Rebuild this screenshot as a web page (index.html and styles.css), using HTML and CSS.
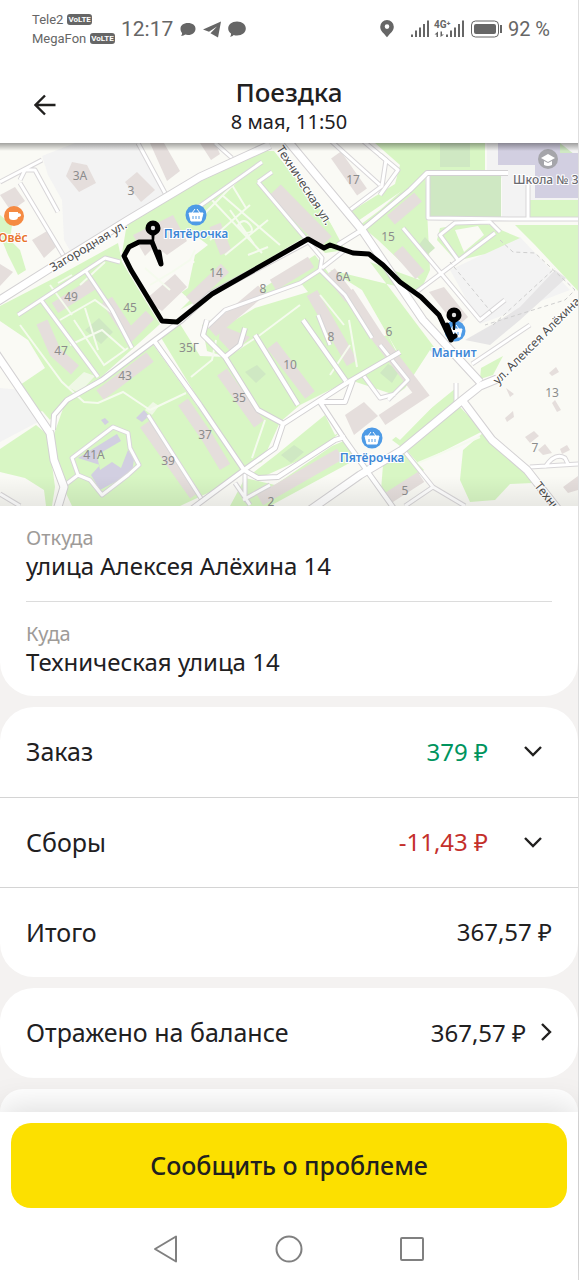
FILE: index.html
```html
<!DOCTYPE html>
<html lang="ru">
<head>
    <meta charset="UTF-8">
    <meta name="viewport" content="width=device-width, initial-scale=1.0">
    <title>Поездка</title>
    <link rel="stylesheet" href="styles.css">
</head>
<body>
    <div class="screen">
        <div class="status-bar">
            <div class="carriers">
                <div class="carrier">Tele2 <span class="volte">VoLTE</span></div>
                <div class="carrier">MegaFon <span class="volte">VoLTE</span></div>
            </div>
            <span class="clock">12:17</span>
            <svg class="notifications" width="66" height="18" viewBox="0 0 66 18">
                <path d="M8 3c4.500 0 7.500 2.300 7.500 5.700S12.500 15 8 15c-1 0-2-.1-2.800-.4C4 15.600 2.300 16 .8 15.800c1-.8 1.400-1.800 1.200-2.900C1 11.800.5 10.300.5 8.700.5 5.300 3.500 3 8 3z"/>
                <path d="M41 1.500 23 9.500l6 2.200L37 6.500l-6.500 6.800 7.500 4.200z"/>
                <path d="M57 1.500c5.200 0 8.800 3 8.800 7s-3.600 7-8.800 7c-1.200 0-2.300-.1-3.300-.5-1 1-2.200 1.500-3.700 1.800.8-1 1.200-2 1-3.200-1.800-1.300-2.800-3-2.800-5.100 0-4 3.600-7 8.800-7z"/>
            </svg>
            <svg class="indicators" width="124" height="20" viewBox="0 0 124 20">
                <path d="M7 1a6.800 6.800 0 0 1 6.800 6.800C13.800 12 10 14.500 7 18.300 4 14.500.2 12 .2 7.800A6.800 6.800 0 0 1 7 1zm0 4.300a2.300 2.300 0 1 0 0 4.600 2.300 2.300 0 0 0 0-4.600z"/>
                <path class="bars" d="M32 15.500V18M36 11.500V18M40 8.500V18M44 5V18M48 1.500V18M67 15.500V18M71 11.500V18M75 8.500V18M79 5V18M83 1.500V18"/>
                <path d="M54.500 15.500 58 12.500V18h-1.500v-2.500zM64 15.500 60.500 18v-5.500H62v3z"/>
                <text class="net" x="54" y="9">4G⁺</text>
                <rect class="battery" x="91.500" y="2" width="27" height="16" rx="4"/>
                <rect x="94" y="5" width="22" height="10" rx="2"/>
                <path d="M120 6h2v8h-2z"/>
            </svg>
            <span class="charge">92 %</span>
        </div>

        <header class="header">
            <button class="back" type="button" aria-label="Назад">
                <svg width="22" height="22" viewBox="0 0 22 22"><path d="M21.500 11H2M11 1.500 1.500 11l9.500 9.500"/></svg>
            </button>
            <h1>Поездка</h1>
            <p>8 мая, 11:50</p>
        </header>

        <svg class="map" viewBox="0 143 578 363" role="img" aria-label="Маршрут поездки">
            <defs>
                <linearGradient id="top-shade" x1="0" y1="0" x2="0" y2="1">
                    <stop offset="0" stop-color="#000" stop-opacity=".35"/>
                    <stop offset="1" stop-color="#000" stop-opacity="0"/>
                </linearGradient>
                <linearGradient id="bottom-shade" x1="0" y1="0" x2="0" y2="1">
                    <stop offset="0" stop-color="#000" stop-opacity="0"/>
                    <stop offset="1" stop-color="#000" stop-opacity=".07"/>
                </linearGradient>
                <g id="basket">
                    <circle r="10.500"/>
                    <path d="M-7-2H7L5 6H-5zM-4-2l3-4M4-2 1-6" fill="#fff" stroke="#fff"/>
                    <path d="M-3 1v3M0 1v3M3 1v3" stroke="#4e9be6"/>
                </g>
                <g id="pin">
                    <path d="M0-7.500A7.500 7.500 0 0 1 7.500 0c0 4-3 6-6 7.500L1 15h-2l-.5-7.500C-4.500 6-7.500 4-7.500 0A7.500 7.500 0 0 1 0-7.500z"/>
                    <circle r="2.200" fill="#ddd"/>
                </g>
                <g id="streets">
                    <path d="M-5 303 60 262 128 220 200 177 270 145"/>
                    <path d="M287 140 362 230 423 320 480 382M-5 352 50 433 54 460 64 487 57 510"/>
                    <path d="M310 510 360 475 402 450 460 402 480 386 497 379M462 400 492 440 527 470 560 512"/>
                </g>
                <g id="driveways">
                    <path d="M53 430 54 415 67 400 102 380 155 340 182 320 210 294 307 242M155 342 200 405 244 470 258 478 278 477 335 440 345 437"/>
                    <path d="M338 245 362 230 410 190 427 173H508M190 510 244 470 275 448 283 424 345 384 400 352"/>
                    <path d="M255 335 298 405M303 320 346 381M207 320 203 335 225 357 258 410 282 423"/>
                    <path d="M225 357 240 345 245 328M320 402 345 402 353 380M320 402 345 440 395 510"/>
                </g>
                <g id="lanes">
                    <path d="M20 180 25 170 35 170 58 212M20 183 68 263M0 182 42 160M138 143 165 193M85 270 112 310 132 348M18 315 105 258 120 262M41 300 98 377"/>
                    <path d="M215 143 232 158M190 213 262 162M258 182 272 172M258 182 322 258 320 270 345 295 372 338M345 250 322 268M330 140 380 185M350 210 382 186 386 160 362 140"/>
                    <path d="M403 228 480 320 505 300M380 155 398 170 380 195M458 260 440 235 455 223 490 222 500 232M415 293 495 233M428 173V218L510 219H579M528 176V218"/>
                    <path d="M207 327 225 310 300 283 320 270M318 315 330 345M363 375 380 398 395 394M380 345 408 380 388 400M456 402V383"/>
                    <path d="M65 485 78 475 72 458 113 427 128 433 130 448 139 465 128 475 102 495 90 480 78 475M148 415 202 500M0 494 20 506"/>
                    <path d="M405 452 433 487 405 506M433 487 465 506M530 467 579 464M545 467q10-15 20-9l3 6M472 364 530 325M235 483 250 505M245 470V500M243 500 270 485"/>
                </g>
            </defs>
            <rect class="land" y="143" width="579" height="363"/>

            <g class="quarter">
                <path d="M42 156 75 143H140L168 195 100 237 72 254 64 240 62 200 48 175z"/>
                <path d="M0 388 22 390 38 422 0 442z"/>
                <path d="M450 270 520 237 570 290 480 324z"/>
                <path d="M487 143H579V220H502V178H487z"/>
            </g>

            <g class="park">
                <path d="M128 217 195 180 258 151 274 151 330 222 345 250 325 253 308 235 212 293 170 315 163 305 188 288 195 255 208 245 195 235 170 228 135 245 122 253z"/>
                <path d="M0 306 60 275 118 243 122 262 145 300 160 324 100 378 66 398 50 420 20 385 45 368 28 340 0 321z"/>
                <path d="M22 388 44 372 62 385 52 410 36 412z"/>
                <path d="M66 400 152 343 200 410 244 470 225 485 180 506 72 506 63 487 52 440z"/>
                <path d="M0 449 36 425 48 435 55 487 52 506 46 506 44 490 25 478 0 472z"/>
                <path d="M160 336 180 324 200 356 226 357 207 351 202 325 260 290 315 255 330 275 420 378 395 395 350 380 300 405 280 422 262 462 244 470 205 410z"/>
                <path d="M350 212 395 184 400 165 375 143 485 143V172L425 175 352 225z"/>
                <path d="M330 270 362 290 425 400 455 384 440 355 370 262 420 280 378 240 360 225 380 210 425 170 430 270 420 292z"/>
                <path d="M440 228 480 221 520 238 485 254 456 261 437 240z"/>
                <path d="M515 225H579V292L535 245z"/>
                <path d="M528 200H579V218H528z"/>
                <path d="M392 440 456 388 460 407 483 431 430 458 418 463 408 452z"/>
                <path d="M463 450 484 432 527 473 533 483 510 484 495 500 470 502 460 480z"/>
                <path d="M383 465 405 450 424 470 395 495 392 506 381 490z"/>
                <path d="M276 455 325 415 335 435 340 432 322 450 258 479 250 475z"/>
                <path d="M245 478 275 485 332 446 346 440 355 460 270 506H230z"/>
                <path d="M370 340 388 335 408 376 390 392 375 370z"/>
                <path d="M481 368 503 356 493 375 480 379z"/>
                <path d="M0 215 12 225 10 240 20 250 26 270 18 275 8 255 0 235z"/>
                <path d="M520 143H560L579 158V165L545 160z" class="shade"/>
                <path class="shade" d="M430 174H501V218L430 219z"/>
                <path class="shade" d="M440 143H470V167H440z"/>
                <path class="shade" d="M425 237l10 11-9 8-8-10zM245 372l12-7 9 9-10 9zM281 455l13-10 10 7-13 11zM85 330l14-12 14 14-12 12zM380 373l8-9 12 6-8 13z"/>
            </g>
            <g class="yard">
                <path d="M283 424 345 386 353 384 335 405 300 425 282 440zM207 322 225 310 300 282 308 292 255 308 215 332zM125 258 150 245 158 262 180 250 195 262 168 280 190 300 170 320 158 318z"/>
                <path d="M68 387 84 372 95 376 79 393zM145 410l8-8 6 4-7 9z" opacity=".7"/>
                <path d="M345 400 370 390 400 396 430 350 455 384 400 440 360 410zM180 150l40-7 20 10-40 24z"/>
                <path d="M455 230 478 226 484 235 464 252zM290 155 300 150 360 228 345 245 330 222zM434 345 460 350 478 380 455 386 438 370z"/>
            </g>

            <g class="building">
                <path d="M72 162l15 3 9 18-17 9-13-16zM125 182l12-10 18 18-14 12zM0 195l15-8 10 14-14 10zM32 240l15-9 11 14-14 13zM0 264l13 8-13 14zM150 143h14l16 28-13 10zM200 143h15l5 11-9 6z"/>
                <path class="block wide-block" d="M275 190 326 242"/>
                <path class="block" d="M215 225 226 253M190 301 225 268"/>
                <path class="block" d="M336 155 362 192"/>
                <path class="block" d="M212 332 262 290M273 285l38-23M55 308 93 284"/>
                <path class="block" d="M391 220 418 197M398 250 420 275M330 272 350 298"/>
                <path class="block" d="M42 322 55 352 75 370M100 395 150 357M222 372 259 424M272 345 310 395M312 293 352 363M348 292 378 338 421 394 382 420"/>
                <path class="block" d="M145 424 195 495M183 402 207 437 225 467"/>
                <path class="block" d="M260 500 340 454M385 500 421 477M107 300 130 335 150 315"/>
                <path d="M133 235l40-20 14 26-20 14-12-9-10 10zM145 300l30-26 12 13-25 24zM429 292l15-5 24 30-11 10zM220 325l30 12-17 17-14-15zM345 415l19-13 14 14-24 19z"/>
                <path d="M525 437l9-6 5 5-9 7zM538 450l7-6 7 9-9 2zM549 373l7-6 3 5-7 4zM505 418l8-7 1 6-7 5zM560 449l7-4 3 5-8 4zM563 487l15-11v14l-10 3zM555 400l6 10-4 2-5-9zM506 388l8 6-4 3z"/>
            </g>
            <path class="mall" d="M500 320 520 307 555 270 566 278 520 320 490 345 465 340z"/>
            <g class="school">
                <path d="M498 143H560V153H579V198H535V165H498z"/>
                <path d="M78 458 117 434 121 441 97 455 100 470 112 462 121 468 128 450 134 459 132 473 100 490 91 475 100 465z"/>
                <path d="M101 420l4-2 4 4-4 3zM136 418l8-8 5 6-7 6z"/>
            </g>

            <g class="paths">
                <path d="M212 200 262 253M222 195 280 245M232 185 246 208M210 240 250 205M200 218 240 178M225 255 268 220M248 255l20-8M230 210l24 34M238 225q6-8 12 0t-6 8z"/>
                <path d="M60 320 95 300 115 315M70 345 102 330 125 350M85 308 98 350M74 320 104 365 128 348M50 285 72 315M105 262 80 285M58 283l14-8"/>
                <path d="M20 325 62 382 84 402 98 403 123 392 150 410M150 410 186 393M191 377 212 360 216 340"/>
                <path d="M226 357 260 335 300 305M265 420 252 458M320 295l24 30M349 320 357 367M418 463 480 437"/>
                <path d="M150 285 172 272 190 260 195 250M145 268 170 290M330 375 350 345"/>
            </g>
            <use class="lane-edge" href="#lanes"/>
            <use class="lane" href="#lanes"/>
            <use class="driveway-edge" href="#driveways"/>
            <use class="street-edge" href="#streets"/>
            <use class="driveway" href="#driveways"/>
            <use class="street" href="#streets"/>
            <path class="track" d="M492 313 450 262M493 325 555 268M500 240 513 252 535 253 575 290 565 300 485 325"/>

            <g class="house">
                <text x="80" y="180">3А</text><text x="131" y="195">3</text><text x="353" y="184">17</text>
                <text x="388" y="241">15</text><text x="216" y="277">14</text><text x="263" y="293">8</text>
                <text x="343" y="281">6А</text><text x="71" y="301">49</text><text x="130" y="312">45</text>
                <text x="61" y="355">47</text><text x="189" y="352">35Г</text><text x="125" y="380">43</text>
                <text x="331" y="341">8</text><text x="389" y="336">6</text><text x="290" y="369">10</text>
                <text x="239" y="402">35</text><text x="205" y="439">37</text><text x="94" y="459">41А</text>
                <text x="168" y="465">39</text><text x="271" y="506">2</text><text x="405" y="495">5</text>
                <text x="535" y="452">7</text><text x="552" y="397">13</text>
            </g>
            <g class="street-name">
                <text transform="translate(53 272) rotate(-31)">Загородная ул.</text>
                <text transform="translate(276 149) rotate(57)">Техническая ул.</text>
                <text transform="translate(498 385) rotate(-45)">ул. Алексея Алёхина</text>
                <text transform="translate(534 486) rotate(52)">Техническая ул.</text>
            </g>

            <g fill="#4e9be6">
                <use href="#basket" x="196" y="215"/>
                <use href="#basket" x="372" y="438"/>
                <use href="#basket" x="455" y="331"/>
            </g>
            <circle cx="14" cy="216" r="10" fill="#f58a42"/>
            <path d="M9 212h9v5q0 3-4 3h-1q-4 0-4-3zM17 213q4 0 4 2t-4 2" fill="#fff"/>
            <circle cx="548" cy="159" r="10" fill="#a5a5aa"/>
            <path d="M541 158l7-4 7 4-7 4zM544 161v4q4 2 8 0v-4l-4 2z" fill="#fff"/>
            <g class="place">
                <text x="196" y="238">Пятёрочка</text>
                <text x="372" y="462">Пятёрочка</text>
                <text x="454" y="357">Магнит</text>
                <text class="cafe" x="13" y="242">Овёс</text>
                <text class="edu" x="513" y="184">Школа № 3</text>
            </g>

            <path class="route" d="M151 242 139 242 129 247 124 256 131 270 162 321 177 322 212 294 308 239 324 248 330 245 353 253 369 254 383 265 400 282 421 297 439 315 451 340"/>
            <path class="route" d="M152 242 161 264 159 252 161 264M447 325 452 338 455 336"/>
            <use href="#pin" x="153" y="228"/>
            <use href="#pin" x="454" y="315"/>
            <rect y="143" width="579" height="8" fill="url(#top-shade)"/>
            <rect y="476" width="579" height="30" fill="url(#bottom-shade)"/>
        </svg>

        <main class="content">
            <section class="card card-route">
                <div class="point">
                    <span class="point-label">Откуда</span>
                    <span class="point-value">улица Алексея Алёхина 14</span>
                </div>
                <div class="point">
                    <span class="point-label">Куда</span>
                    <span class="point-value">Техническая улица 14</span>
                </div>
            </section>

            <section class="card">
                <button class="row" type="button" aria-expanded="false">
                    <span>Заказ</span>
                    <span class="sum plus">379 ₽</span>
                    <svg class="chevron" width="38" height="20" viewBox="0 0 38 20"><path d="M11 6l8 8 8-8"/></svg>
                </button>
                <button class="row" type="button" aria-expanded="false">
                    <span>Сборы</span>
                    <span class="sum minus">-11,43 ₽</span>
                    <svg class="chevron" width="38" height="20" viewBox="0 0 38 20"><path d="M11 6l8 8 8-8"/></svg>
                </button>
                <div class="row">
                    <span>Итого</span>
                    <span class="sum">367,57 ₽</span>
                </div>
            </section>

            <section class="card">
                <button class="row" type="button">
                    <span>Отражено на балансе</span>
                    <span class="sum">367,57 ₽</span>
                    <svg class="arrow" width="12" height="20" viewBox="0 0 12 20"><path d="M2 2l8 8-8 8"/></svg>
                </button>
            </section>

            <section class="card card-next"></section>
        </main>

        <footer class="footer">
            <button class="report" type="button">Сообщить о проблеме</button>
            <nav class="system-nav">
                <button type="button" aria-label="Назад"><svg width="28" height="28" viewBox="0 0 28 28"><path d="M3 14 24 1.500v25z"/></svg></button>
                <button type="button" aria-label="Домой"><svg width="28" height="28" viewBox="0 0 28 28"><circle cx="14" cy="14" r="12.500"/></svg></button>
                <button type="button" aria-label="Недавние"><svg width="28" height="28" viewBox="0 0 28 28"><rect x="3" y="3" width="22" height="22" rx="1"/></svg></button>
            </nav>
        </footer>
    </div>
</body>
</html>
```
FILE: styles.css
```css
* {
    box-sizing: border-box;
}
body {
    margin: 0;
    background-color: #f4f2f1;
    color: #21201f;
    font-family: "Noto Sans", sans-serif;
}
h1, p {
    margin: 0;
}
button {
    border: 0;
    padding: 0;
    background: none;
    color: inherit;
    font: inherit;
    cursor: pointer;
}
svg {
    display: block;
    flex: none;
}
.screen {
    display: flex;
    flex-direction: column;
    min-height: 100vh;
    border-right: 1px solid #dedede;
}

/* Status bar */
.status-bar {
    display: flex;
    align-items: center;
    height: 58px;
    padding: 0 28px 0 32px;
    background-color: #fff;
    color: #666;
    font-family: Roboto, sans-serif;
    fill: #666;
}
.carriers {
    width: 89px;
    font-size: 13px;
    line-height: 19px;
}
.carrier {
    display: flex;
    align-items: center;
    gap: 4px;
}
.volte {
    padding: 0 1px;
    border-radius: 3px;
    background-color: #666;
    color: #fff;
    font-size: 8px;
    font-weight: bold;
    line-height: 11px;
}
.clock {
    font-size: 21px;
}
.notifications {
    margin-left: 7px;
}
.indicators {
    margin-left: auto;
}
.bars {
    stroke: #666;
    stroke-width: 2;
}
.net {
    font-size: 10px;
    font-weight: bold;
}
.battery {
    fill: none;
    stroke: #666;
}
.charge {
    margin-left: 4px;
    font-size: 20px;
}

/* Header */
.header {
    position: relative;
    height: 85px;
    padding-top: 18px;
    background-color: #fff;
    text-align: center;
}
.header h1 {
    font-size: 26px;
    font-weight: 500;
    line-height: 32px;
}
.header p {
    font-size: 20px;
    line-height: 28px;
}
.back {
    position: absolute;
    top: 36px;
    left: 34px;
}
.back path, .chevron path, .arrow path {
    fill: none;
    stroke: #21201f;
    stroke-width: 2.4;
}

/* Map */
.map {
    width: 100%;
    font-family: "Noto Sans", sans-serif;
}
.land, .yard {
    fill: #fafaf5;
}
.quarter {
    fill: #f3f3f3;
}
.park {
    fill: #d8f6c4;
}
.park .shade {
    fill: #cfe8c3;
}
.building {
    fill: #e5dedc;
}
.block {
    fill: none;
    stroke: #e5dedc;
    stroke-width: 12;
}
.wide-block {
    stroke-width: 16;
}
.mall {
    fill: #e6e5e6;
}
.school {
    fill: #d2cfe1;
}
.paths {
    fill: none;
    stroke: #f5fbee;
    stroke-width: 2;
}

/* each road is drawn twice: grey edge first, white core on top */
.street-edge, .street, .driveway-edge, .driveway, .lane-edge, .lane, .track {
    fill: none;
    stroke: #fff;
    stroke-linejoin: round;
}
.street-edge {
    stroke: #d3d1d3;
    stroke-width: 9;
}
.street {
    stroke-width: 7;
}
.driveway-edge {
    stroke: #d3d1d3;
    stroke-width: 6;
}
.driveway {
    stroke-width: 4;
}
.lane-edge {
    stroke: #d8d6d8;
    stroke-width: 5;
}
.lane {
    stroke-width: 3;
}
.track {
    stroke: #cfcfcf;
    stroke-dasharray: 4 3;
}
.house {
    fill: #8c8c8c;
    font-size: 12px;
    text-anchor: middle;
}
.street-name {
    fill: #4d4d4d;
    stroke: #fff;
    stroke-width: 2px;
    paint-order: stroke;
    font-size: 12px;
}
.place {
    fill: #3d87d6;
    stroke: #fff;
    stroke-width: 2px;
    paint-order: stroke;
    font-size: 12px;
    font-weight: 600;
    text-anchor: middle;
}
.place .cafe {
    fill: #e8732c;
}
.place .edu {
    fill: #6b6b70;
    font-weight: 500;
    text-anchor: start;
}
.route {
    fill: none;
    stroke: #000;
    stroke-width: 5;
    stroke-linecap: round;
    stroke-linejoin: round;
}

/* Cards */
.content {
    display: flex;
    flex: 1;
    flex-direction: column;
    gap: 11px;
}
.card {
    border-radius: 34px;
    background-color: #fff;
}
.card-route {
    padding: 0 26px;
    border-radius: 0 0 34px 34px;
}
.point {
    display: flex;
    flex-direction: column;
    height: 95px;
    padding-top: 20px;
}
.point + .point {
    border-top: 1px solid #dcdcdc;
}
.point-label {
    color: #9e9b98;
    font-size: 20px;
    line-height: 24px;
}
.point-value {
    font-size: 24px;
    line-height: 32px;
}
.row {
    display: flex;
    align-items: center;
    width: 100%;
    height: 90px;
    padding: 0 26px 2px;
    font-size: 25px;
    text-align: left;
}
.row + .row {
    border-top: 1px solid #d4d4d4;
}
.sum {
    margin-left: auto;
    font-size: 24px;
}
.plus {
    color: #00945e;
}
.minus {
    color: #c4302b;
}
.chevron {
    margin-left: 26px;
}
.arrow {
    margin-left: 14px;
}
.card-next {
    flex: 1;
    min-height: 23px;
    border-radius: 34px 34px 0 0;
}

/* Bottom panel */
.footer {
    position: sticky;
    bottom: 0;
    padding: 11px 11px 0;
    background-color: #fff;
    box-shadow: 0 -4px 32px rgba(0, 0, 0, 0.14);
}
.report {
    width: 100%;
    height: 85px;
    padding-bottom: 2px;
    border-radius: 20px;
    background-color: #fce000;
    font-size: 25px;
    font-weight: 500;
}
.system-nav {
    display: flex;
    justify-content: center;
    gap: 95px;
    padding: 27px 0 17px;
}
.system-nav svg {
    fill: none;
    stroke: #808080;
    stroke-width: 2;
    stroke-linejoin: round;
}
```
